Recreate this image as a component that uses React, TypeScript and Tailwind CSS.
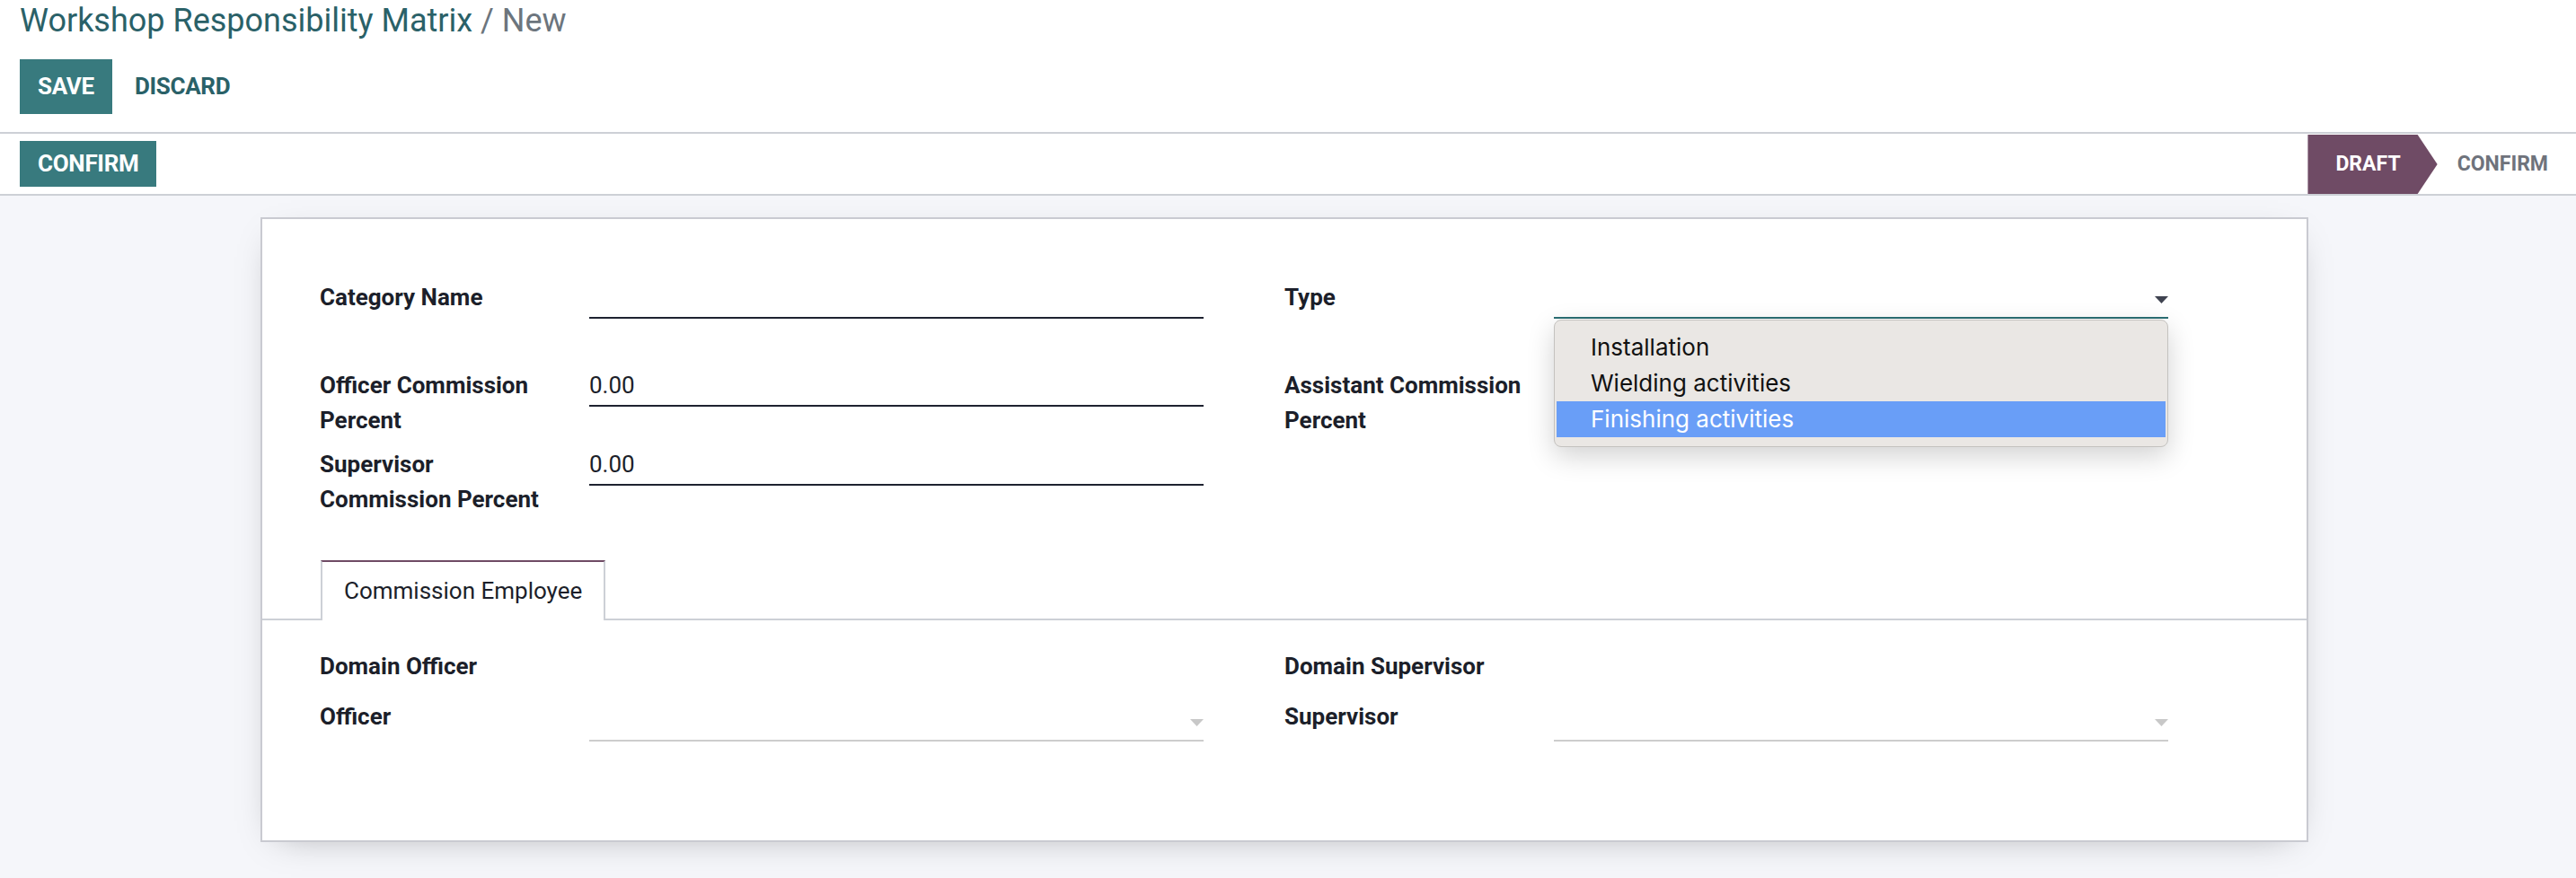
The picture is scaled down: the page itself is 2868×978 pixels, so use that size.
import { Fragment } from 'react'

// shared text styles
const label = "pr-[30px] text-[26px] leading-[39px] font-bold text-[#1c1f2a]"
const fieldCols = "grid grid-cols-[300px_684px_90px_300px_684px]"

function Caret({ color, className }: { color: string; className?: string }) {
  return (
    <svg width="15" height="8" viewBox="0 0 15 8" className={className}>
      <polygon points="0,0 15,0 7.5,8" fill={color} />
    </svg>
  )
}

function TextInput({ value }: { value?: string }) {
  return (
    <div className="h-[43px] border-b-2 border-[#1e2230] text-[26px] leading-[39px] text-[#1c1f2a]">
      {value}
    </div>
  )
}

function Many2one() {
  return (
    <div className="relative h-[47px] border-b-2 border-[#cdcdcd]">
      <Caret color="#c8c8c8" className="absolute right-0 top-[22px]" />
    </div>
  )
}

const typeOptions = ['Installation', 'Wielding activities', 'Finishing activities']

function TypeSelect() {
  return (
    <div className="relative z-10 h-[43px] border-b-2 border-[#2b6f74]">
      <Caret color="#3f4350" className="absolute right-0 top-[18px]" />
      {/* native select popup, open */}
      <div className="absolute left-0 top-[44px] w-full rounded-[8px] bg-[#eae7e4] py-[10px] border border-[#c4c2bf] shadow-[0_10px_30px_rgba(0,0,0,0.18)]">
        {typeOptions.map((opt, i) => (
          <div
            key={opt}
            className={
              i === 2
                ? "mx-[2px] h-[40px] pl-[38px] bg-[#699ef7] text-white font-['Inter',sans-serif] text-[26px] leading-[40px]"
                : "mx-[2px] h-[40px] pl-[38px] text-[#111111] font-['Inter',sans-serif] text-[26px] leading-[40px]"
            }
          >
            {opt}
          </div>
        ))}
      </div>
    </div>
  )
}

export default function App() {
  return (
    <div className="w-[2868px] h-[978px] overflow-hidden bg-[#f5f6fa] font-['Roboto',sans-serif]">
      {/* Control panel */}
      <div className="h-[149px] bg-white border-b-2 border-[#cdd0d6] pl-[22px]">
        <div className="text-[36px] leading-[46px] text-[#2a6168]">
          Workshop Responsibility Matrix <span className="text-[#6c757d]">/ New</span>
        </div>
        <div className="mt-[20px] flex items-center gap-[4px]">
          <button className="h-[61px] px-[20px] bg-[#387a7e] text-white text-[26px] font-bold uppercase tracking-[-0.3px]">
            Save
          </button>
          <button className="h-[61px] px-[21px] text-[#2a6168] text-[26px] font-bold uppercase tracking-[-0.3px]">
            Discard
          </button>
        </div>
      </div>

      {/* Status bar */}
      <div className="h-[69px] bg-white border-b-2 border-[#cdd0d6] flex justify-between pl-[22px]">
        <button className="mt-[8px] h-[51px] px-[20px] bg-[#387a7e] text-white text-[26px] font-bold uppercase tracking-[-0.3px]">
          Confirm
        </button>
        <div className="flex h-[66px] mt-[1px] items-center">
          <div className="h-full flex items-center pl-[31px] pr-[41px] bg-[#6f4b65] text-white text-[23px] font-bold uppercase [clip-path:polygon(0_0,calc(100%-22px)_0,100%_50%,calc(100%-22px)_100%,0_100%)]">
            Draft
          </div>
          <div className="pl-[22px] pr-[31px] text-[#6f737c] text-[23px] font-bold uppercase">Confirm</div>
        </div>
      </div>

      {/* Sheet */}
      <div className="pt-[24px]">
        <div className="ml-[290px] w-[2280px] h-[696px] bg-white border-2 border-[#c9cad1] shadow-[0_10px_40px_-20px_rgba(0,0,0,0.35)]">
          <div className={`pt-[68px] pl-[64px] ${fieldCols} grid-rows-[98px_88px_78px]`}>
            <div className={label}>Category Name</div>
            <TextInput />
            <div />
            <div className={label}>Type</div>
            <TypeSelect />

            <div className={label}>Officer Commission Percent</div>
            <TextInput value="0.00" />
            <div />
            <div className={label}>Assistant Commission Percent</div>
            {/* value hidden behind the open popup */}
            <TextInput />

            <div className={label}>Supervisor Commission Percent</div>
            <TextInput value="0.00" />
            <div />
            <div />
            <div />
          </div>

          {/* Notebook */}
          <div className="mt-[48px] flex border-b-2 border-[#cdd0d6] pl-[65px]">
            <div className="-mb-[2px] h-[67px] flex items-center px-[24px] bg-white border-t-2 border-t-[#6f4b65] border-x-2 border-x-[#cdd0d6] text-[26px] text-[#1c1f2a]">
              Commission Employee
            </div>
          </div>
          <div className={`pt-[32px] pl-[64px] ${fieldCols} grid-rows-[56px_47px]`}>
            {[
              ['Domain Officer', 'Domain Supervisor', false],
              ['Officer', 'Supervisor', true],
            ].map(([left, right, hasField]) => (
              <Fragment key={left as string}>
                <div className={label}>{left}</div>
                {hasField ? <Many2one /> : <div />}
                <div />
                <div className={label}>{right}</div>
                {hasField ? <Many2one /> : <div />}
              </Fragment>
            ))}
          </div>
        </div>
      </div>
    </div>
  )
}
